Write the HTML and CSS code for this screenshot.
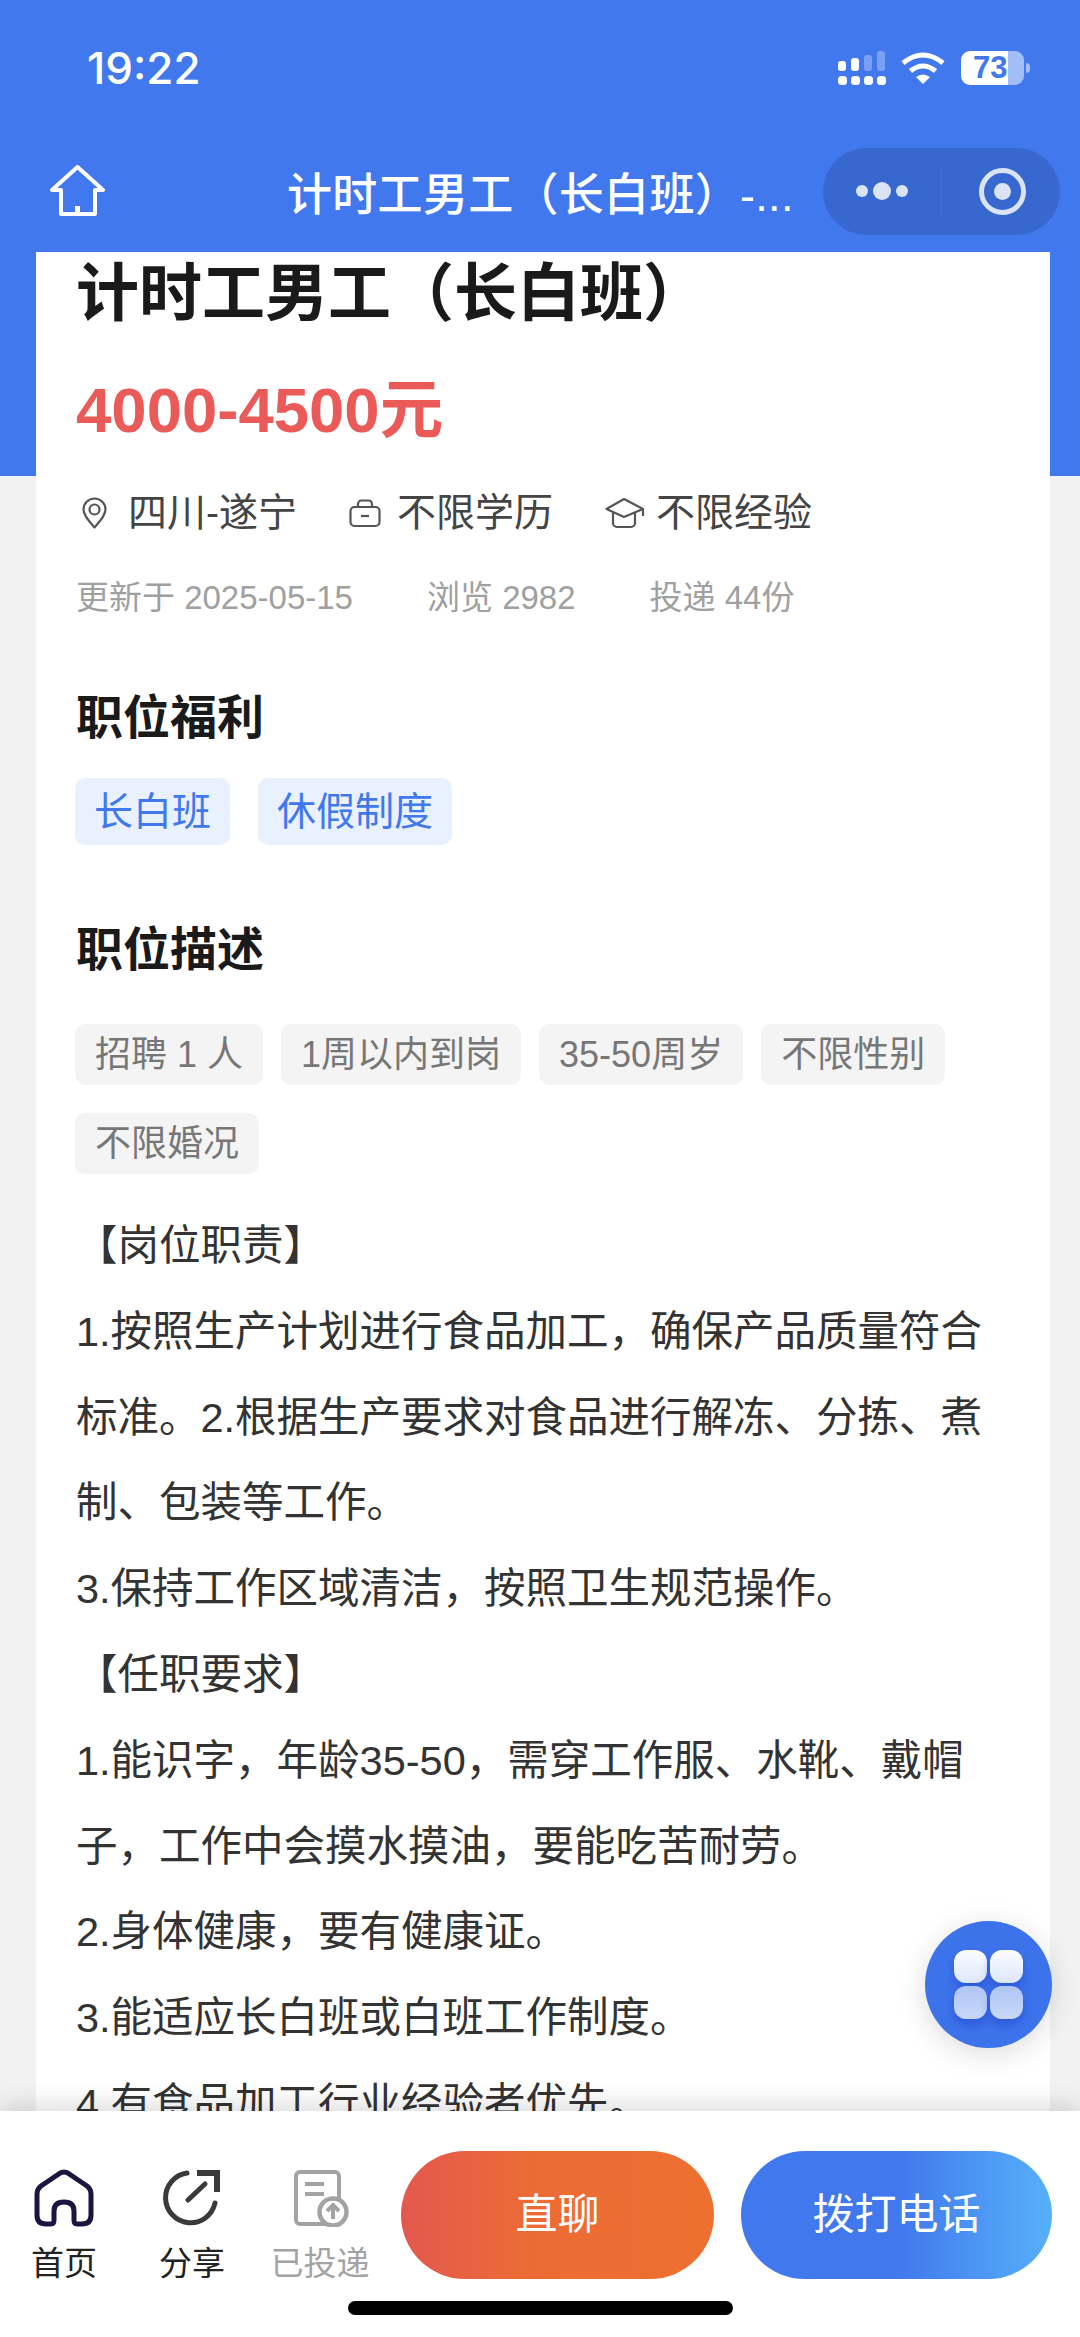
FILE: index.html
```html
<!DOCTYPE html>
<html lang="zh-CN">
<head>
    <meta charset="UTF-8">
    <meta name="viewport" content="width=device-width, initial-scale=1.0">
    <title>计时工男工（长白班）</title>
    <link rel="stylesheet" href="styles.css">
</head>
<body>
    <div class="page">
        <header class="top">
            <div class="status-bar">
                <span class="clock">19:22</span>
                <div class="status-icons">
                    <svg class="signal" width="48" height="34" viewBox="0 0 48 34" fill="#fff">
                        <rect x="0" y="10" width="8" height="10" rx="3"/>
                        <rect x="13" y="7" width="8" height="13" rx="3"/>
                        <rect x="26" y="4" width="8" height="16" rx="3" opacity=".3"/>
                        <rect x="39" y="0" width="8" height="20" rx="3" opacity=".3"/>
                        <rect x="0" y="25" width="9" height="9" rx="3.5"/>
                        <rect x="13" y="25" width="9" height="9" rx="3.5"/>
                        <rect x="26" y="25" width="9" height="9" rx="3.5"/>
                        <rect x="39" y="25" width="9" height="9" rx="3.5"/>
                    </svg>
                    <svg class="wifi" width="44" height="32" viewBox="0 0 44 32" fill="none" stroke="#fff" stroke-width="5">
                        <path d="M2 11 Q22 -5 42 11"/>
                        <path d="M9.500 19 Q22 9 34.500 19"/>
                        <path d="M15 25 Q22 20 29 25 L22 32 Z" fill="#fff" stroke="none"/>
                    </svg>
                    <div class="battery">73</div>
                </div>
            </div>
            <nav class="nav">
                <svg class="nav-home" width="55" height="52" viewBox="0 0 55 52" fill="none" stroke="#fff" stroke-width="4" stroke-linejoin="round">
                    <path d="M27.500 2 L53 25 H45 V49 H11 V25 H2 Z"/>
                    <path d="M25 49 V41 H30 V49" fill="#fff" stroke="none"/>
                </svg>
                <div class="nav-title">计时工男工（长白班）-...</div>
                <div class="capsule">
                    <div class="capsule-dots"><i></i><i class="big"></i><i></i></div>
                    <div class="capsule-target"><i></i></div>
                </div>
            </nav>
        </header>

        <main class="main">
            <div class="card">
                <h1 class="job-title">计时工男工（长白班）</h1>
                <div class="salary">4000-4500元</div>

                <div class="info-row">
                    <span class="info">
                        <svg width="30" height="32" viewBox="0 0 30 32" fill="none" stroke="#555" stroke-width="2.200">
                            <path d="M12.500 30.500 C7 24 1.500 18.500 1.500 12.500 A11 11 0 0 1 23.500 12.500 C23.500 18.500 18 24 12.500 30.500 Z" stroke-linejoin="round"/>
                            <circle cx="12.500" cy="12.500" r="5"/>
                        </svg>
                        四川-遂宁
                    </span>
                    <span class="info">
                        <svg width="32" height="28" viewBox="0 0 32 28" fill="none" stroke="#555" stroke-width="2.200">
                            <rect x="1.500" y="8" width="29" height="19" rx="4"/>
                            <path d="M9 8 V5 A3.500 3.500 0 0 1 12.500 1.500 H19.500 A3.500 3.500 0 0 1 23 5 V8"/>
                            <path d="M12 17 H20"/>
                        </svg>
                        不限学历
                    </span>
                    <span class="info">
                        <svg class="cap" width="35" height="32" viewBox="0 0 35 32" fill="none" stroke="#555" stroke-width="2.200" stroke-linejoin="round">
                            <path d="M1.500 12 L19 2 L38 12 L19 20 Z"/>
                            <path d="M8 16 V26 A4 4 0 0 0 12 30 H26 A4 4 0 0 0 30 26 V16"/>
                            <path d="M38 12 V19"/>
                        </svg>
                        不限经验
                    </span>
                </div>

                <div class="meta-row">
                    <span>更新于 2025-05-15</span>
                    <span>浏览 2982</span>
                    <span>投递 44份</span>
                </div>

                <h2 class="section-title welfare-title">职位福利</h2>
                <div class="tags tags-blue">
                    <span class="tag tag-blue">长白班</span>
                    <span class="tag tag-blue">休假制度</span>
                </div>

                <h2 class="section-title desc-title">职位描述</h2>
                <div class="tags tags-gray">
                    <span class="tag tag-gray">招聘 1 人</span>
                    <span class="tag tag-gray">1周以内到岗</span>
                    <span class="tag tag-gray">35-50周岁</span>
                    <span class="tag tag-gray">不限性别</span>
                    <span class="tag tag-gray">不限婚况</span>
                </div>

                <div class="desc">
                    <p>【岗位职责】</p>
                    <p>1.按照生产计划进行食品加工，确保产品质量符合标准。2.根据生产要求对食品进行解冻、分拣、煮制、包装等工作。</p>
                    <p>3.保持工作区域清洁，按照卫生规范操作。</p>
                    <p>【任职要求】</p>
                    <p>1.能识字，年龄35-50，需穿工作服、水靴、戴帽子，工作中会摸水摸油，要能吃苦耐劳。</p>
                    <p>2.身体健康，要有健康证。</p>
                    <p>3.能适应长白班或白班工作制度。</p>
                    <p>4.有食品加工行业经验者优先。</p>
                </div>
            </div>
        </main>

        <!-- floating menu button over the content -->
        <div class="fab">
            <i class="fab-cell"></i><i class="fab-cell"></i>
            <i class="fab-cell low"></i><i class="fab-cell low"></i>
        </div>

        <footer class="bottom">
            <div class="actions">
                <div class="tabs">
                    <div class="tab">
                        <svg width="60" height="58" viewBox="0 0 60 58" fill="none" stroke="#1d1440" stroke-width="5" stroke-linejoin="round">
                            <path d="M30 3 Q27 3 24 5.500 L7 17 Q3 20 3 25 V46 Q3 55 12 55 H17 Q20 55 20 51 V42 Q20 33 30 33 Q40 33 40 42 V51 Q40 55 43 55 H48 Q57 55 57 46 V25 Q57 20 53 17 L36 5.500 Q33 3 30 3 Z"/>
                        </svg>
                        <span class="tab-label">首页</span>
                    </div>
                    <div class="tab">
                        <svg width="60" height="58" viewBox="0 0 60 58" fill="none" stroke="#3a3a3a" stroke-width="5" stroke-linecap="round">
                            <path d="M25 4 A25 25 0 1 0 53 34"/>
                            <path d="M35 4 H55 V23" stroke-width="6" stroke-linecap="butt"/>
                            <path d="M26 31 L43 15"/>
                        </svg>
                        <span class="tab-label">分享</span>
                    </div>
                    <div class="tab tab-off">
                        <svg width="60" height="58" viewBox="0 0 60 58" fill="none" stroke="#a3a3a3" stroke-width="4">
                            <rect x="6" y="3" width="43" height="52" rx="4"/>
                            <path d="M15 15 H34 M15 25 H34"/>
                            <circle cx="43" cy="43" r="13.500" fill="#fff" stroke-width="4.500"/>
                            <path d="M43 50 V37 M37 42 L43 36 L49 42" stroke-width="4"/>
                        </svg>
                        <span class="tab-label">已投递</span>
                    </div>
                </div>
                <div class="btn btn-chat">直聊</div>
                <div class="btn btn-call">拨打电话</div>
            </div>
            <div class="home-bar"></div>
        </footer>
    </div>
</body>
</html>
```

FILE: styles.css
```css
* {
    margin: 0;
    padding: 0;
    box-sizing: border-box;
}

body {
    width: 1080px;
    height: 2337px;
    overflow: hidden;
    background: #fff;
    font-family: "Liberation Sans", "Noto Sans CJK SC", sans-serif;
}

.page {
    position: relative;
    display: flex;
    flex-direction: column;
    height: 100%;
}

.top {
    background: #4178ee;
    color: #fff;
}

.status-bar {
    display: flex;
    justify-content: space-between;
    align-items: center;
    height: 136px;
    padding: 0 56px 0 87px;
}

.clock {
    font-family: Inter, "Liberation Sans", sans-serif;
    font-size: 44px;
    font-weight: 500;
}

.status-icons {
    display: flex;
    align-items: center;
}

.wifi {
    margin: 0 16px 0 15px;
}

.battery {
    position: relative;
    width: 63px;
    height: 34px;
    border-radius: 9px;
    background: linear-gradient(90deg, #fff 0, #fff 47px, #a3bdf6 47px);
    color: #4178ee;
    font-size: 31px;
    font-weight: bold;
    line-height: 34px;
    padding-left: 12px;
}

.battery::after {
    content: '';
    position: absolute;
    right: -6px;
    top: 12px;
    width: 4px;
    height: 10px;
    border-radius: 0 4px 4px 0;
    background: #a3bdf6;
}

.nav {
    display: flex;
    align-items: center;
    height: 116px;
    padding: 0 20px 6px 50px;
}

.nav-title {
    flex: 1;
    padding-left: 182px;
    font-size: 45px;
    font-weight: 500;
    letter-spacing: 0.3px;
    white-space: nowrap;
}

.capsule {
    display: flex;
    align-items: center;
    width: 237px;
    height: 87px;
    border-radius: 44px;
    background: #3768cf;
}

.capsule-dots {
    display: flex;
    justify-content: center;
    align-items: center;
    gap: 5px;
    width: 119px;
    height: 55px;
    border-right: 1px solid #3f6fd6;
}

.capsule-dots i {
    width: 12px;
    height: 12px;
    border-radius: 50%;
    background: #dbe3f6;
}

.capsule-dots i.big {
    width: 18px;
    height: 18px;
}

.capsule-target {
    display: flex;
    justify-content: center;
    align-items: center;
    width: 47px;
    height: 47px;
    margin-left: 37px;
    border: 5px solid #dbe3f6;
    border-radius: 50%;
}

.capsule-target i {
    width: 17px;
    height: 17px;
    border-radius: 50%;
    background: #dbe3f6;
}

.main {
    flex: 1;
    min-height: 0;
    overflow: hidden;
    padding: 0 30px 0 36px;
    background: linear-gradient(#4178ee 0, #4178ee 224px, #f2f2f2 224px);
}

.card {
    min-height: 100%;
    padding: 0 40px;
    background: #fff;
}

.job-title {
    font-size: 63px;
    font-weight: bold;
    line-height: 82px;
    color: #1a1a1a;
}

.salary {
    margin-top: 36px;
    font-size: 63.500px;
    font-weight: bold;
    line-height: 80px;
    color: #e95a58;
}

.info-row {
    display: flex;
    align-items: center;
    height: 50px;
    margin-top: 34px;
    padding-left: 6px;
    font-size: 39px;
    color: #444;
}

.info {
    display: flex;
    align-items: center;
    gap: 16px;
    margin-right: 52px;
}

.info svg {
    margin-top: 8px;
    overflow: visible;
}

.info:last-child {
    margin-right: 0;
}

.meta-row {
    display: flex;
    gap: 74px;
    height: 40px;
    margin-top: 44px;
    font-size: 33px;
    line-height: 40px;
    color: #a0a0a0;
}

.section-title {
    font-size: 47px;
    font-weight: bold;
    line-height: 60px;
    color: #1a1a1a;
}

.welfare-title {
    margin-top: 70px;
}

.desc-title {
    margin-top: 75px;
}

.tags {
    display: flex;
    flex-wrap: wrap;
    margin-left: -1px;
}

.tags-blue {
    gap: 28px;
    margin-top: 30px;
}

.tags-gray {
    gap: 28px 18px;
    margin-top: 44px;
}

.tag {
    border-radius: 10px;
    white-space: nowrap;
}

.tag-blue {
    padding: 0 19px;
    font-size: 39px;
    line-height: 67px;
    color: #4178ee;
    background: #e8f1fd;
}

.tag-gray {
    padding: 0 20px;
    font-size: 36px;
    line-height: 61px;
    color: #777;
    background: #f4f4f4;
}

.desc {
    margin-top: 29px;
    font-size: 41.500px;
    line-height: 85.800px;
    color: #333;
}

.fab {
    position: absolute;
    left: 925px;
    top: 1921px;
    display: grid;
    grid-template-columns: 33px 33px;
    gap: 3px;
    place-content: center;
    width: 127px;
    height: 127px;
    border-radius: 50%;
    background: #3d73ea;
    box-shadow: 0 6px 30px rgba(0, 0, 0, 0.14);
}

.fab-cell {
    height: 33px;
    border-radius: 12px;
    background: linear-gradient(#fbfcff, #dde6fb);
    box-shadow: 0 6px 10px rgba(24, 60, 200, 0.45);
}

.fab-cell.low {
    background: linear-gradient(#aec5f4, #c9d8f8);
}

.bottom {
    position: relative;
    display: flex;
    flex-direction: column;
    height: 226px;
    padding-top: 40px;
    background: #fff;
    box-shadow: 0 -4px 26px rgba(0, 0, 0, 0.16);
}

.actions {
    display: flex;
    align-items: flex-start;
    height: 128px;
    padding-right: 28px;
}

.tabs {
    display: flex;
    width: 401px;
    padding-top: 18px;
}

.tab {
    display: flex;
    flex-direction: column;
    align-items: center;
    width: 128px;
}

.tab-label {
    margin-top: 15px;
    font-size: 33px;
    line-height: 44px;
    color: #222;
}

.tab-off .tab-label {
    color: #a3a3a3;
}

.btn {
    height: 128px;
    border-radius: 64px;
    color: #fff;
    font-size: 42px;
    line-height: 128px;
    text-align: center;
}

.btn-chat {
    width: 313px;
    background: linear-gradient(90deg, #e3584f 0%, #ec6b35 40%, #ed7030 100%);
}

.btn-call {
    width: 311px;
    margin-left: 27px;
    background: linear-gradient(90deg, #4178ee 0%, #4178ee 50%, #56b0f9 100%);
}

.home-bar {
    align-self: center;
    width: 385px;
    height: 14px;
    margin-top: 22px;
    border-radius: 7px;
    background: #000;
}
```
